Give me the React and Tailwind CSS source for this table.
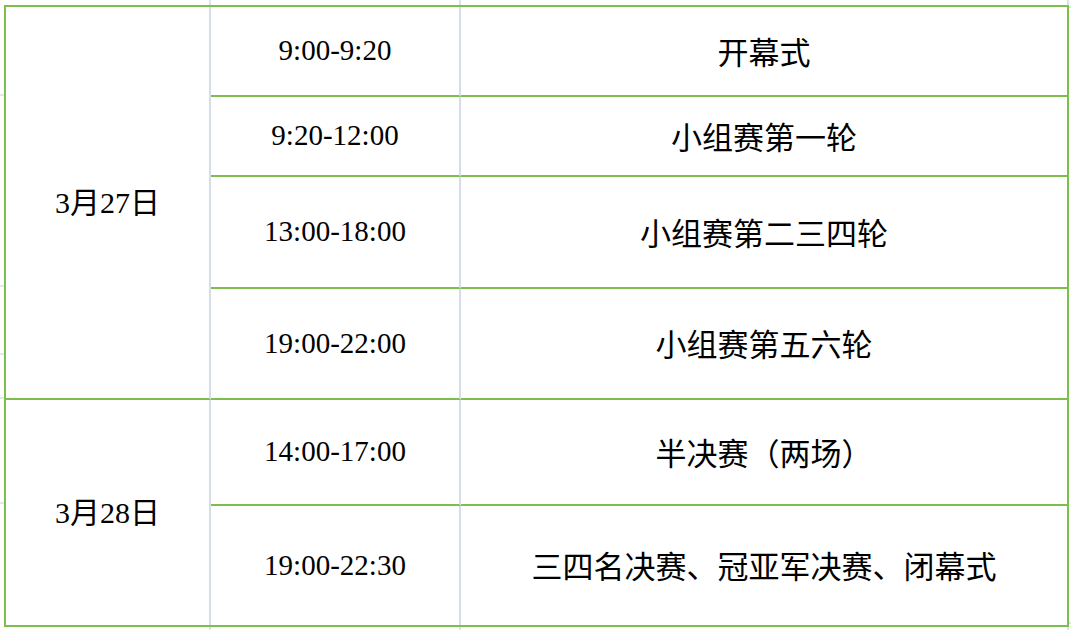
const rows = [
  { time: '9:00-9:20', event: '开幕式', h: 'h-[90px]' },
  { time: '9:20-12:00', event: '小组赛第一轮', h: 'h-[80px]' },
  { time: '13:00-18:00', event: '小组赛第二三四轮', h: 'h-[112px]' },
  { time: '19:00-22:00', event: '小组赛第五六轮', h: 'h-[111px]' },
  { time: '14:00-17:00', event: '半决赛（两场）', h: 'h-[106px]' },
  { time: '19:00-22:30', event: '三四名决赛、冠亚军决赛、闭幕式', h: 'h-[119px]' },
]

const serif = "font-['Liberation_Serif','Noto_Sans_CJK_SC',serif]"
const cjk = "font-['Noto_Sans_CJK_SC','Liberation_Serif',sans-serif]"

function GridStrip({ h }) {
  // spreadsheet gridlines peeking out above / below the table
  return (
    <div className={`flex ${h}`}>
      <div className="w-[4px]" />
      <div className="w-[207px] border-r-2 border-[#dde3ee]" />
      <div className="w-[250px] border-r-2 border-[#dde3ee]" />
      <div className="w-[608px] border-r-2 border-[#dde3ee]" />
    </div>
  )
}

export default function App() {
  return (
    <div className="w-[1071px] h-[630px] bg-white overflow-hidden text-black">
      <GridStrip h="h-[5px]" />
      <div className="flex">
        <div className="w-[4px] flex flex-col">
          <div className="h-[91px] border-b-2 border-[#e2e6ee]" />
          <div className="h-[191px] border-b-2 border-[#e2e6ee]" />
          <div className="h-[68px] border-b-2 border-[#e2e6ee]" />
          <div className="h-[44px] border-b-2 border-[#e2e6ee]" />
          <div className="h-[105px] border-b-2 border-[#e2e6ee]" />
        </div>
        <div className="grid grid-cols-[205px_250px_606px] border-2 border-[#7cbf4c]">
          <div className={`row-span-4 flex items-center justify-center border-b-2 border-r-2 border-b-[#7cbf4c] border-r-[#d6dcea] text-[30px] ${serif}`}>
            3月27日
          </div>
          {rows.slice(0, 4).map((r) => (
            <Row key={r.time} r={r} />
          ))}
          <div className={`row-span-2 flex items-center justify-center border-r-2 border-r-[#d6dcea] text-[30px] ${serif}`}>
            3月28日
          </div>
          {rows.slice(4).map((r, i) => (
            <Row key={r.time} r={r} last={i === 1} />
          ))}
        </div>
        <div className="w-[2px] flex flex-col">
          <div className="h-[1px]" />
          <div className="h-[618px] border-y-2 border-[#dde3ee]" />
        </div>
      </div>
      <GridStrip h="h-[8px]" />
    </div>
  )
}

function Row({ r, last }) {
  const b = last ? '' : 'border-b-2 border-b-[#7cbf4c]'
  return (
    <>
      <div className={`${r.h} ${b} border-r-2 border-r-[#d6dcea] flex items-center justify-center text-[29px] ${serif}`}>
        {r.time}
      </div>
      <div className={`${r.h} ${b} flex items-center justify-center text-[31px] ${cjk}`}>
        {r.event}
      </div>
    </>
  )
}
